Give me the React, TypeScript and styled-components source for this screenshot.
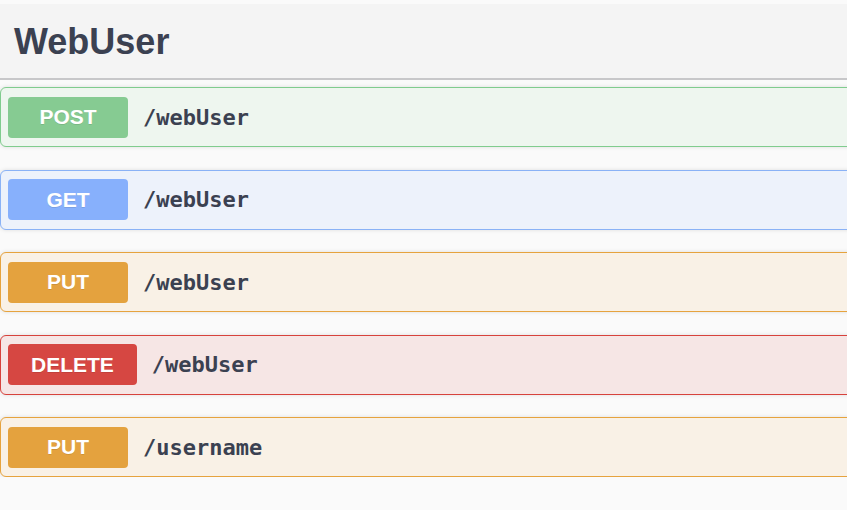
import React from "react";
import styled, { createGlobalStyle } from "styled-components";

const Global = createGlobalStyle`
  html, body { margin: 0; padding: 0; background: #fafafa; overflow: hidden; }
  body { font-family: "Liberation Sans", Arial, sans-serif; color: #3b4151; }
`;

const Page = styled.div`
  width: 880px;
  padding-top: 4px;
`;

const TagHeader = styled.h3`
  margin: 0 0 7px;
  height: 76px;
  box-sizing: border-box;
  display: flex;
  align-items: center;
  padding: 2px 15px 0 14px;
  background: #f4f4f4;
  border-bottom: 2px solid #c7c7c9;
  font-family: "Liberation Sans", Arial, sans-serif;
  font-size: 36px;
  font-weight: 700;
  color: #3b4151;
`;

const List = styled.div`
  display: flex;
  flex-direction: column;
  gap: 22.5px;
`;

type Theme = { bg: string; border: string; badge: string };

const themes: Record<string, Theme> = {
  POST: { bg: "#eef6ef", border: "#80cc8e", badge: "#86cb92" },
  GET: { bg: "#edf2fb", border: "#8ab2f6", badge: "#87b0fc" },
  PUT: { bg: "#f9f1e6", border: "#e6a33e", badge: "#e4a23e" },
  DELETE: { bg: "#f6e6e5", border: "#d7423c", badge: "#d64742" },
};

const Block = styled.div<{ $t: Theme }>`
  height: 60px;
  box-sizing: border-box;
  display: flex;
  align-items: center;
  padding: 0 7px;
  background: ${(p) => p.$t.bg};
  border: 1px solid ${(p) => p.$t.border};
  border-radius: 6px;
  box-shadow: 0 0 4px rgba(0, 0, 0, 0.12);
`;

const Badge = styled.span<{ $t: Theme }>`
  min-width: 120px;
  height: 41px;
  box-sizing: border-box;
  padding: 0 23px;
  display: flex;
  align-items: center;
  justify-content: center;
  border-radius: 4px;
  background: ${(p) => p.$t.badge};
  color: #fff;
  font-family: "Liberation Sans", Arial, sans-serif;
  font-size: 21px;
  font-weight: 700;
  text-shadow: 0 1px 0 rgba(0, 0, 0, 0.1);
`;

const Path = styled.span`
  padding: 0 15px;
  font-family: "DejaVu Sans Mono", monospace;
  font-size: 22px;
  font-weight: 700;
  color: #3b4151;
`;

const ops = [
  { m: "POST", p: "/webUser" },
  { m: "GET", p: "/webUser" },
  { m: "PUT", p: "/webUser" },
  { m: "DELETE", p: "/webUser" },
  { m: "PUT", p: "/username" },
];

export default function App() {
  return (
    <>
      <Global />
      <Page>
        <TagHeader>WebUser</TagHeader>
        <List>
          {ops.map((o, i) => (
            <Block key={i} $t={themes[o.m]}>
              <Badge $t={themes[o.m]}>{o.m}</Badge>
              <Path>{o.p}</Path>
            </Block>
          ))}
        </List>
      </Page>
    </>
  );
}
